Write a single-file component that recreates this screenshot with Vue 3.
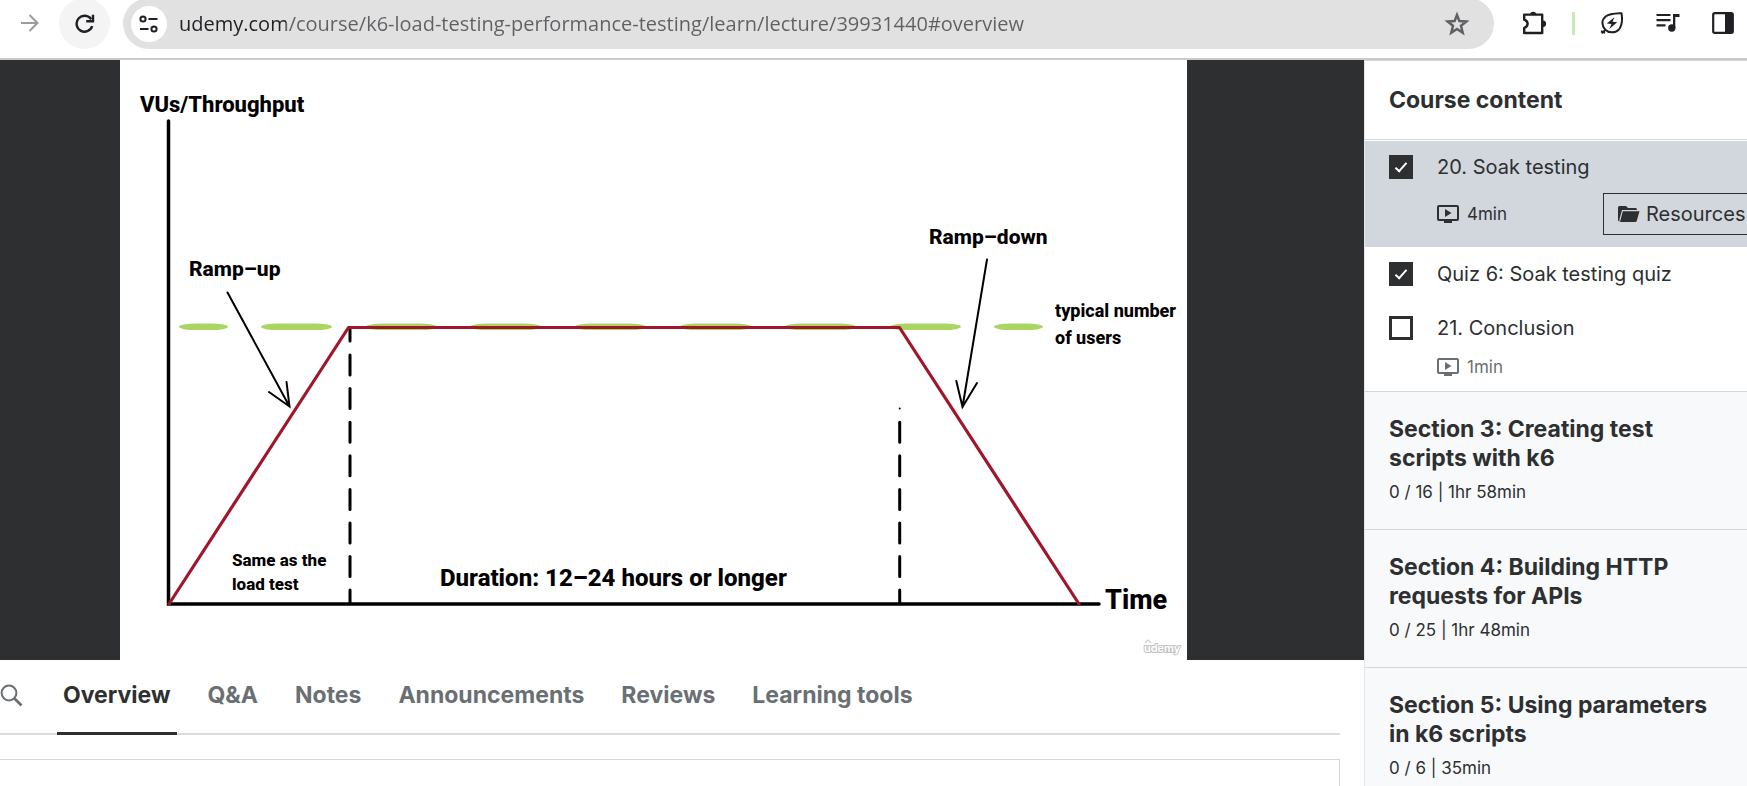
<script setup>
import { ref } from 'vue'

const url = ref('udemy.com/course/k6-load-testing-performance-testing/learn/lecture/39931440#overview')

const tabs = ['Overview', 'Q&A', 'Notes', 'Announcements', 'Reviews', 'Learning tools']
const activeTab = ref('Overview')

const lectures = ref([
  { id: 'l20', title: '20. Soak testing', done: true, duration: '4min', resources: true, current: true },
  { id: 'q6', title: 'Quiz 6: Soak testing quiz', done: true },
  { id: 'l21', title: '21. Conclusion', done: false, duration: '1min' },
])

const sections = [
  { title: 'Section 3: Creating test scripts with k6', meta: '0 / 16 | 1hr 58min' },
  { title: 'Section 4: Building HTTP requests for APIs', meta: '0 / 25 | 1hr 48min' },
  { title: 'Section 5: Using parameters in k6 scripts', meta: '0 / 6 | 35min' },
]

const greenDashes = [
  [59, 49], [141, 71], [246, 71], [350, 71], [455, 71], [560, 71], [665, 71], [770, 71], [874, 49],
]
</script>

<template>
  <div class="window">
    <header class="toolbar">
      <button class="tool forward" aria-label="Forward">
        <svg width="18" height="18" viewBox="0 0 18 18" fill="none" stroke="#9b9b9b" stroke-width="2">
          <path d="M0 9H16.5M8.5 1L16.5 9L8.5 17" />
        </svg>
      </button>
      <button class="tool reload" aria-label="Reload">
        <svg width="20" height="20" viewBox="0 0 20 20" fill="none" stroke="#1f2024" stroke-width="2.4">
          <path d="M17.2 12.2A8 8 0 1 1 16.2 5.2" />
          <path d="M18 0.8V7.2H11.2" />
        </svg>
      </button>
      <div class="address">
        <button class="site-info" aria-label="Site information">
          <svg width="20" height="18" viewBox="0 0 20 18" fill="none" stroke="#1f2024" stroke-width="2">
            <circle cx="4" cy="4" r="2.6" />
            <path d="M9.5 4H18.5M1 14H9.5" />
            <circle cx="15" cy="14" r="2.6" />
          </svg>
        </button>
        <input v-model="url" class="url" type="text" aria-label="Address" spellcheck="false" />
        <button class="tool" aria-label="Bookmark this page">
          <svg width="26" height="26" viewBox="0 0 26 26" fill="none" stroke="#5f6063" stroke-width="2.5">
            <path d="M13 4L15.4 10.1L22.3 10.5L17 14.8L18.7 21.7L13 18L7.3 21.7L9 14.8L3.7 10.5L10.6 10.1Z" />
          </svg>
        </button>
      </div>
      <div class="actions">
        <button class="tool" aria-label="Extensions">
          <svg width="26" height="26" viewBox="0 0 26 26">
            <path d="M3.2 4.6H21.2V23H3.2V17.8C5.6 17 6.6 15.5 6.6 13.7C6.6 12 5.6 10.5 3.2 9.7Z" fill="none" stroke="#1f2024" stroke-width="2.4" stroke-linejoin="round" />
            <path d="M9 4.2A3.3 3.3 0 0 1 15.4 4.2ZM21.8 10.4A3.3 3.3 0 0 1 21.8 17Z" fill="#1f2024" />
          </svg>
        </button>
        <span class="divider"></span>
        <button class="tool" aria-label="Energy saver">
          <svg width="24" height="24" viewBox="0 0 24 24" fill="none" stroke="#1f2024" stroke-width="2">
            <path d="M21.5 2.2C22.5 8 22 14.5 19 18.3C15.5 22.3 9 22.3 5.3 18.7C1.2 14.5 1.5 8.5 6 5.2C9.5 2.6 14.5 2.6 21.5 2.2Z" stroke-linejoin="round" />
            <path d="M5.6 18.6L1.8 22.4M1 20.2L5 21.8" />
            <path d="M14.4 6.2L6.8 12.5L11.5 13L9.3 17.9L17.2 11.2L12.5 10.8Z" fill="#1f2024" stroke="none" />
          </svg>
        </button>
        <button class="tool" aria-label="Media controls">
          <svg width="24" height="20" viewBox="0 0 24 20">
            <path d="M0.5 2H14.5M0.5 7.2H14.5M0.5 12.4H9.5" stroke="#1f2024" stroke-width="2.2" />
            <path d="M17 1H23.5V4H19.3V15H17Z" fill="#1f2024" />
            <circle cx="15.8" cy="15" r="3.7" fill="#1f2024" />
          </svg>
        </button>
        <button class="tool" aria-label="Side panel">
          <svg width="22" height="22" viewBox="0 0 22 22">
            <rect x="1.2" y="1.2" width="19.6" height="19.6" rx="1.6" fill="none" stroke="#1f2024" stroke-width="2.2" />
            <path d="M13 1H21V21H13Z" fill="#1f2024" />
          </svg>
        </button>
      </div>
    </header>

    <div class="page">
      <main class="main">
        <section class="player" aria-label="Lecture video">
          <svg class="slide" viewBox="0 0 1067 600" role="img" aria-label="Soak test profile">
            <rect width="1067" height="600" fill="#fff" />
            <g fill="#a9d562">
              <rect v-for="d in greenDashes" :key="d[0]" :x="d[0]" y="263.5" :width="d[1]" height="6.6" rx="17" ry="3.3" />
            </g>
            <g stroke="#000" stroke-width="3.5" stroke-linecap="round">
              <path d="M48.5 61V544H979" fill="none" />
            </g>
            <g stroke="#000" stroke-width="3" stroke-linecap="round">
              <path d="M230 269V281M230 295V315M230 328.6V348.6M230 362.2V382.2M230 395.8V415.8M230 429.4V449.4M230 463V483M230 496.6V516.6M230 530V542" />
              <path d="M779.7 362.2V382.2M779.7 395.8V415.8M779.7 429.4V449.4M779.7 463V483M779.7 496.6V516.6M779.7 530V542" />
            </g>
            <circle cx="779.7" cy="348.6" r="1" />
            <path d="M49 544L228.5 267.5H779.5L959 544" fill="none" stroke="#a0162b" stroke-width="3.2" stroke-linecap="round" stroke-linejoin="round" />
            <g fill="none" stroke="#000" stroke-width="2" stroke-linecap="round">
              <path d="M107.5 232.5L169.5 346.5M149 332L169.5 346.5L166.5 322" />
              <path d="M867 199.5L842.5 347M836.3 321L842.5 347L857 323" />
            </g>
            <g class="slide-text">
              <text class="label-lg" x="20" y="52">VUs/Throughput</text>
              <text class="label" x="69" y="216">Ramp–up</text>
              <text class="label" x="809" y="184">Ramp–down</text>
              <text class="note" x="935" y="257">typical number</text>
              <text class="note" x="935" y="284">of users</text>
              <text class="note-sm" x="112" y="506">Same as the</text>
              <text class="note-sm" x="112" y="530">load test</text>
              <text class="duration" x="320" y="526">Duration: 12–24 hours or longer</text>
              <text class="axis" x="985" y="549">Time</text>
            </g>
            <path d="M1025 583L1028 580L1031 583" fill="none" stroke="#ccc" stroke-width="1.2" />
            <text class="watermark" x="1024" y="592">udemy</text>
          </svg>
        </section>

        <div class="below">
          <nav class="tabs" aria-label="Course">
            <button class="search" aria-label="Search course">
              <svg width="24" height="24" viewBox="0 0 24 24" fill="none" stroke="#6a6f73" stroke-width="2">
                <circle cx="9" cy="9" r="7.4" />
                <path d="M14.5 14.5L21.5 21.5" stroke-width="2.8" />
              </svg>
            </button>
            <button
              v-for="tab in tabs"
              :key="tab"
              class="tab"
              :class="{ active: tab === activeTab }"
              @click="activeTab = tab"
            >{{ tab }}</button>
          </nav>
          <div class="panel"></div>
        </div>
      </main>

      <aside class="sidebar">
        <h2 class="sidebar-title">Course content</h2>
        <ul class="lectures">
          <li v-for="l in lectures" :key="l.id" class="lecture" :class="{ current: l.current }">
            <input :id="l.id" v-model="l.done" class="check" type="checkbox" />
            <div class="lecture-body">
              <label class="lecture-title" :for="l.id">{{ l.title }}</label>
              <div v-if="l.duration" class="lecture-meta">
                <svg width="22" height="18" viewBox="0 0 22 18">
                  <rect x="1" y="1" width="20" height="14" rx="1" fill="none" stroke="currentColor" stroke-width="2" />
                  <path d="M8 4L14.5 8L8 12ZM7 15H15V18H7Z" fill="currentColor" />
                </svg>
                <span>{{ l.duration }}</span>
                <button v-if="l.resources" class="resources">
                  <svg width="22" height="18" viewBox="0 0 22 18" fill="currentColor">
                    <path d="M0 2.5Q0 1 1.5 1H8L10 3H17.5Q19 3 19 4.5V5H4L1.5 14V16.5Q0 16 0 15Z" />
                    <path d="M4.8 6.3H21.5L18.8 15.8Q18.5 17 17 17H2Z" />
                  </svg>
                  Resources
                </button>
              </div>
            </div>
          </li>
        </ul>
        <section v-for="s in sections" :key="s.title" class="section">
          <h3>{{ s.title }}</h3>
          <p>{{ s.meta }}</p>
        </section>
      </aside>
    </div>
  </div>
</template>

<style>
body {
  margin: 0;
  overflow: hidden;
}
</style>

<style scoped>
.window {
  display: flex;
  flex-direction: column;
  height: 100vh;
  overflow: hidden;
  background: #fff;
  color: #2d2f31;
  font-family: Inter, Roboto, "Liberation Sans", sans-serif;
}

button {
  margin: 0;
  padding: 0;
  border: 0;
  background: none;
  color: inherit;
  font: inherit;
  cursor: pointer;
}

svg {
  display: block;
  flex: none;
}

/* browser toolbar */
.toolbar {
  display: flex;
  align-items: flex-start;
  flex: none;
  box-sizing: border-box;
  height: 60px;
  border-bottom: 2px solid #c9cacb;
  overflow: hidden;
}

.tool {
  display: flex;
  align-items: center;
  justify-content: center;
  height: 46px;
}

.forward {
  margin-left: 21px;
}

.reload {
  width: 51px;
  height: 51px;
  margin-top: -2px;
  margin-left: 20px;
  border-radius: 50%;
  background: #f4f4f4;
}

.address {
  display: flex;
  align-items: center;
  flex: 1;
  height: 51px;
  margin-top: -2px;
  margin-left: 13px;
  padding: 0 24px 0 8px;
  box-sizing: border-box;
  border-radius: 26px;
  background: #e1e1e1;
}

.site-info {
  display: flex;
  align-items: center;
  justify-content: center;
  flex: none;
  width: 36px;
  height: 36px;
  border-radius: 50%;
  background: #fff;
}

.url {
  flex: 1;
  min-width: 0;
  margin-left: 12px;
  padding: 0;
  border: 0;
  outline: 0;
  background: linear-gradient(90deg, #1f2024 107px, #5f6063 107px);
  background-clip: text;
  color: transparent;
  font: 20px/32px "Open Sans", "Noto Sans", sans-serif;
}

.actions {
  display: flex;
  gap: 32px;
  margin-left: 27px;
  padding-right: 13px;
}

.divider {
  width: 3px;
  height: 23px;
  margin: 12px -7px 0;
  background: #c6eab8;
}

/* page */
.page {
  display: flex;
  flex: 1;
  min-height: 0;
}

.main {
  flex: 1;
  min-width: 0;
}

.player {
  display: flex;
  justify-content: center;
  padding-right: 57px;
  background: #2d2f31;
}

.slide {
  height: 600px;
}

.slide-text {
  font-family: Roboto, "Liberation Sans", sans-serif;
  font-weight: 800;
}

.label-lg { font-size: 22px; }
.label { font-size: 21px; }
.note { font-size: 18px; }
.note-sm { font-size: 17px; }
.duration { font-size: 24px; }
.axis { font-size: 27px; }

.watermark {
  fill: #fff;
  stroke: #c4c4c4;
  stroke-width: 2px;
  paint-order: stroke;
  font: 600 11px Inter, sans-serif;
}

.below {
  padding-right: 24px;
}

.tabs {
  display: flex;
  align-items: stretch;
  height: 73px;
  border-bottom: 2px solid #d9dde1;
}

.search {
  margin-right: 33px;
  padding-bottom: 2px;
}

.tab {
  margin-right: 25px;
  margin-bottom: -2px;
  padding: 0 6px 2px;
  border-bottom: 3px solid transparent;
  color: #6a6f73;
  font-size: 23px;
  font-weight: 700;
  white-space: nowrap;
}

.tab.active {
  border-color: #2d2f31;
  color: #2d2f31;
}

.panel {
  height: 80px;
  margin-top: 24px;
  border: 1px solid #d1d7dc;
  border-left: 0;
}

/* sidebar */
.sidebar {
  flex: none;
  box-sizing: border-box;
  width: 383px;
  border-top: 1px solid #d1d7dc;
  border-left: 1px solid #e4e8eb;
  overflow: hidden;
}

.sidebar-title {
  margin: 0 0 1px;
  padding: 24px;
  border-bottom: 1px solid #d1d7dc;
  font-size: 23px;
  line-height: 30px;
}

.lectures {
  margin: 0;
  padding: 0;
  list-style: none;
}

.lecture {
  display: flex;
  align-items: flex-start;
  gap: 24px;
  padding: 11px 0 13px 24px;
}

.lecture.current {
  height: 82px;
  margin-bottom: 1px;
  background: #d1d7dc;
}

.check {
  display: grid;
  place-items: center;
  flex: none;
  box-sizing: border-box;
  width: 24px;
  height: 24px;
  margin: 3px 0 0;
  appearance: none;
  border: 3px solid #2d2f31;
  background: #fff;
}

.check:checked {
  background: #2d2f31;
}

.check:checked::before {
  content: "";
  width: 4px;
  height: 10px;
  margin-bottom: 3px;
  border: solid #fff;
  border-width: 0 2px 2px 0;
  transform: rotate(42deg);
}

.lecture-body {
  flex: 1;
  min-width: 0;
}

.lecture-title {
  display: block;
  font-size: 20px;
  line-height: 30px;
  white-space: nowrap;
}

.lecture-meta {
  display: flex;
  align-items: center;
  gap: 8px;
  height: 22px;
  margin-top: 13px;
  color: #6a6f73;
  font-size: 17px;
  white-space: nowrap;
}

.current .lecture-meta {
  height: 42px;
  margin-top: 11px;
  color: #2d2f31;
}

.resources {
  display: flex;
  align-items: center;
  gap: 6px;
  flex: none;
  box-sizing: border-box;
  width: 160px;
  height: 42px;
  margin-left: auto;
  margin-right: -16px;
  padding: 0 14px;
  border: 1px solid #2d2f31;
  font-size: 20px;
}

.section {
  height: 137px;
  box-sizing: content-box;
  border-top: 1px solid #d1d7dc;
  background: #f7f9fa;
}

.section h3 {
  margin: 0;
  padding: 23px 24px 0;
  font-size: 23px;
  line-height: 29px;
}

.section p {
  margin: 7px 24px 0;
  font-size: 17px;
  line-height: 24px;
}
</style>
